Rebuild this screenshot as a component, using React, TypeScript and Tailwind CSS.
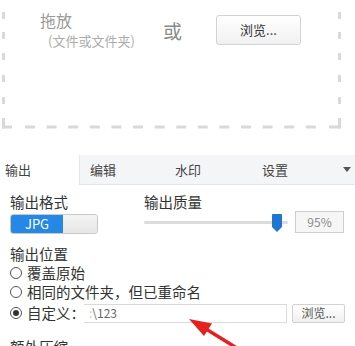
import React from "react";

const font = { fontFamily: '"Noto Sans CJK SC", "Noto Sans", sans-serif' };

function DashedFrame() {
  const vys = [12, 32, 53, 75, 97];
  const hxs = Array.from({ length: 14 }, (_, k) => 25 + 21.6 * k);
  const c = "#d9d9d9";
  return (
    <svg className="absolute left-0 top-0" width="355" height="135" viewBox="0 0 355 135">
      {vys.map((y) => (
        <rect key={"l" + y} x="2" y={y} width="3" height="7" fill={c} />
      ))}
      {vys.map((y) => (
        <rect key={"r" + y} x="338" y={y} width="3" height="7" fill={c} />
      ))}
      {hxs.map((x) => (
        <rect key={"b" + x} x={x} y="125.5" width="10" height="3" fill={c} />
      ))}
      <rect x="2" y="118" width="3" height="10.5" fill={c} />
      <rect x="2" y="125.5" width="10" height="3" fill={c} />
      <rect x="338" y="118" width="3" height="10.5" fill={c} />
      <rect x="329" y="125.5" width="12" height="3" fill={c} />
    </svg>
  );
}

function Radio({ checked }: { checked?: boolean }) {
  return (
    <div className="w-[12px] h-[12px] min-w-[12px] rounded-full border border-[#555] bg-white flex items-center justify-center shrink-0 mr-[5px]">
      {checked && <div className="w-[6px] h-[6px] rounded-full bg-[#333]" />}
    </div>
  );
}

export default function App() {
  return (
    <div className="relative w-[355px] h-[346px] overflow-hidden bg-white text-[#333]" style={font}>
      {/* drop zone */}
      <div className="relative h-[155px]">
        <DashedFrame />
        <div className="relative flex items-start pl-[40px] pt-[10px]">
          <div className="w-[123px] flex flex-col">
            <span className="text-[16px] leading-[20px] text-[#9a9a9a]">拖放</span>
            <span className="text-[13px] leading-[16px] text-[#ababab] mt-[3px] ml-[8px]">(文件或文件夹)</span>
          </div>
          <span className="text-[19px] leading-[24px] text-[#8a8a8a] mt-[8.5px]">或</span>
          <button className="ml-[34px] mt-[5px] w-[85px] h-[30px] rounded-[3px] border border-[#cfd3d8] bg-gradient-to-b from-white to-[#f1f1f1] text-[13px] text-[#333] flex items-center justify-center">
            浏览...
          </button>
        </div>
      </div>

      {/* tabs */}
      <div className="flex h-[30px] bg-[#f4f5f7] text-[13px] text-[#444]">
        <div className="w-[80px] h-full bg-white border-r border-[#e4e6ea] pl-[5px] flex items-center">输出</div>
        <div className="w-[85px] h-full border-b border-[#e4e6ea] pl-[10px] flex items-center">编辑</div>
        <div className="w-[87px] h-full border-b border-[#e4e6ea] pl-[10px] flex items-center">水印</div>
        <div className="flex-1 h-full border-b border-[#e4e6ea] pl-[10px] pr-[4px] flex items-center justify-between">
          <span>设置</span>
          <svg width="8" height="5" viewBox="0 0 8 5">
            <path d="M0 0 L8 0 L4 5 Z" fill="#555" />
          </svg>
        </div>
      </div>

      {/* content */}
      <div className="pl-[10px] text-[14.5px] whitespace-nowrap">
        <div className="flex pt-[7px]">
          <div className="w-[134px] flex flex-col">
            <span className="leading-[20px]">输出格式</span>
            <div className="mt-[2px] w-[88px] h-[20px] flex rounded-[3px] overflow-hidden border border-[#c9c9c9]">
              <div className="w-[52px] h-full bg-[#2587e6] text-white text-[13px] flex items-center justify-center">JPG</div>
              <div className="flex-1 h-full bg-gradient-to-b from-[#f4f4f4] to-[#e6e6e6]" />
            </div>
          </div>
          <div className="flex flex-col">
            <span className="leading-[20px]">输出质量</span>
            <div className="flex items-center -mt-[1px]">
              <div className="relative w-[144px] h-[22px] flex items-center">
                <div className="w-full h-[3px] bg-[#dcdcdc] rounded-full" />
                <svg className="absolute left-[128px] top-[3px]" width="10" height="18" viewBox="0 0 10 18">
                  <path d="M1 0 H9 Q10 0 10 1 V13 L5 18 L0 13 V1 Q0 0 1 0 Z" fill="#1f76d2" />
                </svg>
              </div>
              <div className="ml-[7px] w-[49px] h-[22px] border border-[#cfcfcf] bg-[#f6f6f6] text-[12px] text-[#8a8a8a] flex items-center justify-center">
                95%
              </div>
            </div>
          </div>
        </div>

        <div className="mt-[10px] leading-[19px] h-[19px]">输出位置</div>
        <div className="h-[19px] flex items-center">
          <Radio />
          <span>覆盖原始</span>
        </div>
        <div className="h-[20px] flex items-center">
          <Radio />
          <span>相同的文件夹，但已重命名</span>
        </div>
        <div className="mt-[1px] h-[20px] flex items-center">
          <Radio checked />
          <span className="w-[57px] shrink-0">自定义：</span>
          <div className="w-[203px] shrink-0 h-[19px] border border-[#dadada] border-l-0 bg-white text-[12px] text-[#666] pl-[5px] flex items-center">
            <span className="text-[#c8c8c8]">:</span>
            <span>\123</span>
          </div>
          <button className="ml-[5px] w-[53px] shrink-0 h-[19px] rounded-[2px] border border-[#d2d2d2] bg-gradient-to-b from-white to-[#f0f0f0] text-[12px] text-[#555] flex items-center justify-center">
            浏览...
          </button>
        </div>
        <div className="mt-[14px] leading-[20px]">额外压缩</div>
      </div>

      {/* red arrow */}
      <svg className="absolute left-0 top-0 pointer-events-none" width="355" height="346" viewBox="0 0 355 346">
        <line x1="206" y1="329" x2="240" y2="350" stroke="#e42020" strokeWidth="3.5" strokeLinecap="round" />
        <path d="M189 319 L212 323.5 L204 336 Z" fill="#e42020" />
      </svg>
    </div>
  );
}
